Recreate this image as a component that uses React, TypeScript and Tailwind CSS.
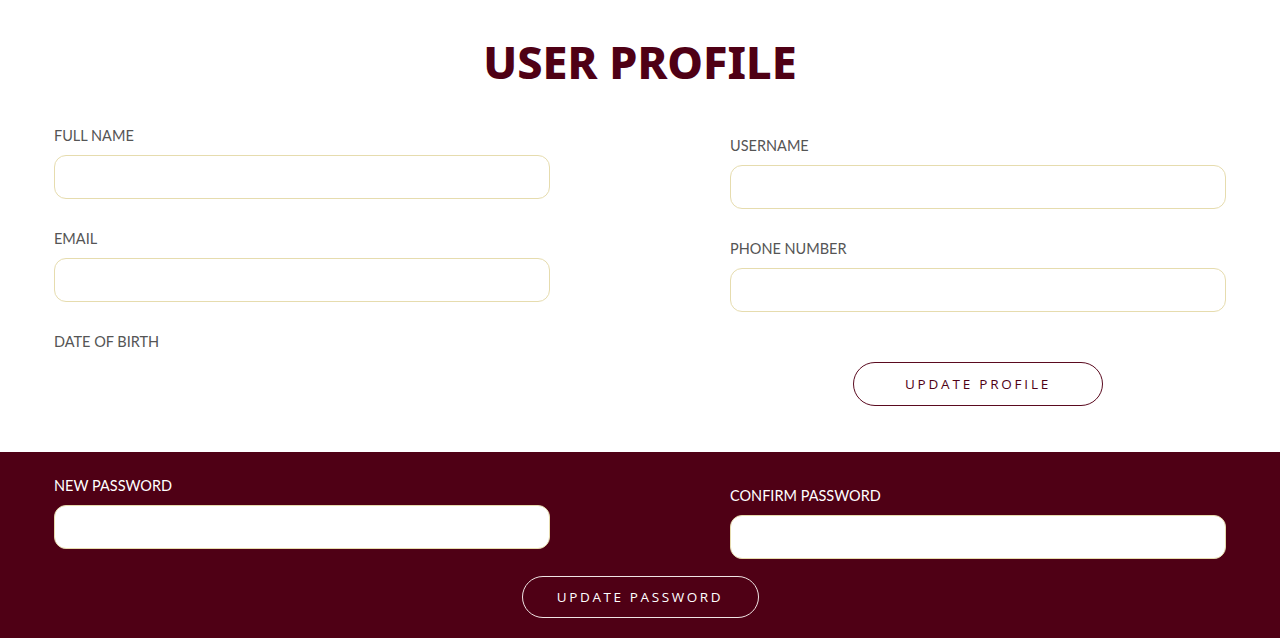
import React from 'react';

const labelFont = { fontFamily: '"Lato", "Noto Sans", sans-serif' };

function Field({ label, dark }: { label: string; dark?: boolean }) {
  return (
    <div className="flex flex-col">
      <label
        className={`text-[14.5px] leading-[20px] h-[20px] ${dark ? 'text-white' : 'text-[#555555]'}`}
        style={labelFont}
      >
        {label}
      </label>
      <input className="mt-[9px] h-[44px] w-[496px] rounded-[12px] border border-[#e6dcae] bg-white outline-none" />
    </div>
  );
}

export default function App() {
  return (
    <div className="w-[1280px] h-[638px] bg-white overflow-hidden" style={{ fontFamily: '"Inter", "Noto Sans", sans-serif' }}>
      <div className="pt-[34px] flex justify-center">
        <h1 className="text-[45px] leading-[56px] font-extrabold text-[#4f0015]" style={{ fontFamily: '"Noto Sans", sans-serif' }}>
          USER PROFILE
        </h1>
      </div>

      <div className="mt-[36px] grid grid-cols-[676px_1fr] pl-[54px] h-[326px]">
        <div className="flex flex-col gap-[30px]">
          <Field label="FULL NAME" />
          <Field label="EMAIL" />
          <label className="text-[14.5px] leading-[20px] text-[#555555]" style={labelFont}>
            DATE OF BIRTH
          </label>
        </div>
        <div className="pt-[10px] flex flex-col">
          <div className="flex flex-col gap-[30px]">
            <Field label="USERNAME" />
            <Field label="PHONE NUMBER" />
          </div>
          <div className="w-[496px] flex justify-center mt-[50px]">
            <button
              className="w-[250px] h-[44px] rounded-full border border-[#5a0a1f] text-[#4f0015] text-[13.5px] tracking-[2.8px]"
              style={{ fontFamily: '"Open Sans", sans-serif' }}
            >
              UPDATE PROFILE
            </button>
          </div>
        </div>
      </div>

      <div className="bg-[#4f0015] h-[186px] pt-[24px]">
        <div className="grid grid-cols-[676px_1fr] pl-[54px]">
          <Field label="NEW PASSWORD" dark />
          <div className="pt-[10px]">
            <Field label="CONFIRM PASSWORD" dark />
          </div>
        </div>
        <div className="flex justify-center mt-[17px]">
          <button
            className="w-[237px] h-[42px] rounded-full border border-[#f0e4e4] text-white text-[13.5px] tracking-[2.6px]"
            style={{ fontFamily: '"Open Sans", sans-serif' }}
          >
            UPDATE PASSWORD
          </button>
        </div>
      </div>
    </div>
  );
}
